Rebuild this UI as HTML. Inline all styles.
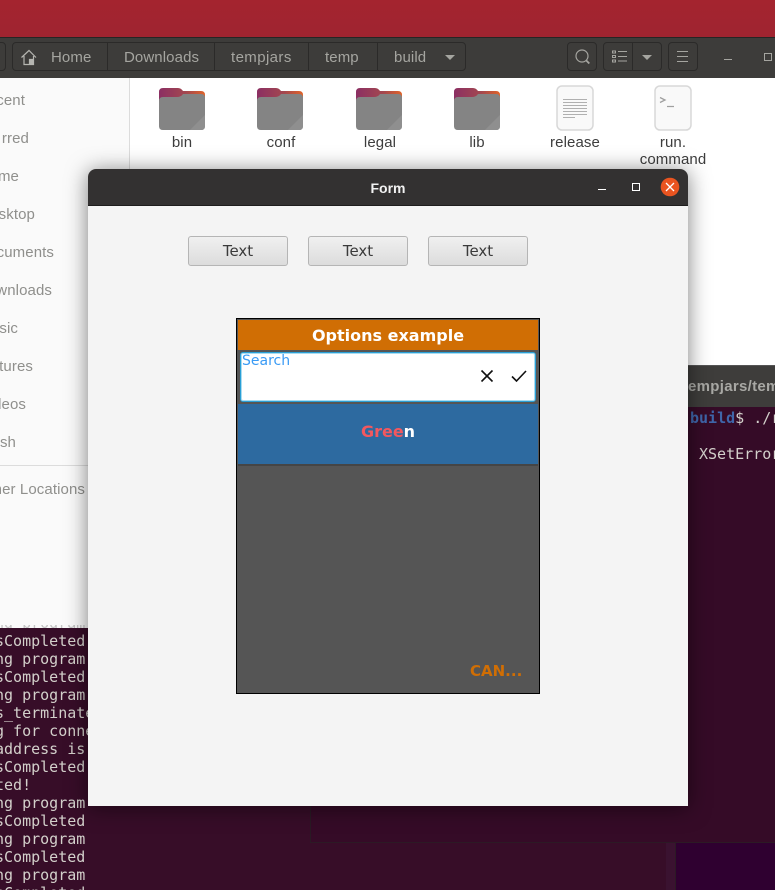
<!DOCTYPE html>
<html><head><meta charset="utf-8"><style>
html,body{margin:0;padding:0;background:#370d28;width:775px;height:890px;overflow:hidden}
#r{position:absolute;left:0;top:0;width:775px;height:890px;overflow:hidden;font-family:"Liberation Sans",sans-serif}
.a{position:absolute}
.t{position:absolute;white-space:pre;line-height:18px}
.term{font-family:"DejaVu Sans Mono","Liberation Mono",monospace;font-size:15px;color:#d3d0cb}
.side{width:200px;text-align:right;color:#8f8f8c;font-size:15px;letter-spacing:.1px;line-height:18px;position:absolute;white-space:pre}
.lbl{position:absolute;text-align:center;color:#3d3d3d;font-size:15px;letter-spacing:.1px;line-height:17px;white-space:pre}
.crumb{position:absolute;color:#a5a5a0;font-size:15px;letter-spacing:.1px;line-height:18px;top:49px;white-space:pre}
.sep{position:absolute;top:42px;height:29px;width:1px;background:#2b2a29}
.hbtn{position:absolute;top:42px;height:27px;border:1px solid #2b2a29;border-radius:4px;box-sizing:content-box}
.btn{position:absolute;top:236px;width:98px;height:28px;border:1px solid #b5b5b5;border-radius:3px;background:linear-gradient(#f0f0f0,#dcdcdc);color:#3a3a3a;font:15px/28px "DejaVu Sans",sans-serif;text-align:center}
</style></head><body><div id="r">

<!-- wallpaper / bottom terminals -->
<div class="a" style="left:0;top:0;width:775px;height:37px;background:linear-gradient(#a4242f,#9f2430)"></div>
<div class="a" style="left:0;top:628px;width:310px;height:262px;background:#370d28"></div>
<div class="a" style="left:310px;top:406px;width:465px;height:436px;background:#350b27;border-left:1px solid #2a1a24;box-sizing:border-box"></div>
<div class="a" style="left:310px;top:842px;width:465px;height:1px;background:#2c1a25"></div>
<div class="a" style="left:666px;top:843px;width:9px;height:47px;background:#3a1230"></div>
<div class="a" style="left:675px;top:843px;width:1px;height:47px;background:#2c1a25"></div>
<div class="a" style="left:676px;top:843px;width:99px;height:47px;background:#2f0030"></div>

<!-- left terminal text -->
<div class="t term" style="left:-5px;top:632px;width:93px;height:258px;overflow:hidden;">sCompleted
ng program
sCompleted
ng program
s_terminate
g for conne
address is
sCompleted
ted!
ng program
sCompleted
ng program
sCompleted
ng program
sCompleted</div>

<!-- file manager -->
<div class="a" style="left:0;top:37px;width:775px;height:41px;background:#3d3c3a;border-top:1px solid #262524;box-sizing:border-box"></div>
<div class="a" style="left:0;top:78px;width:129px;height:550px;background:#fafafa;border-right:1px solid #dcdcdc;box-sizing:content-box"></div>
<div class="a" style="left:130px;top:78px;width:645px;height:287px;background:#fff"></div>
<div class="a" style="left:130px;top:365px;width:180px;height:263px;background:#fff"></div>
<div class="a" style="left:0;top:465px;width:130px;height:1px;background:#dcdcdc"></div>
<div class="t term" style="left:-5px;top:614px;width:93px;height:14px;overflow:hidden;color:#c4c4c4;clip-path:inset(11px 0 0 0)">ng program</div>

<div class="hbtn" style="left:-8px;width:12px"></div>
<div class="hbtn" style="left:12px;width:452px"></div>
<div class="sep" style="left:107px"></div><div class="sep" style="left:214px"></div><div class="sep" style="left:308px"></div><div class="sep" style="left:377px"></div>
<svg class="a" style="left:20px;top:48px" width="18" height="18" viewBox="0 0 18 18" fill="none" stroke="#b5b5b0" stroke-width="1.2"><path d="M1.500 9.500 9 2.500l7 7M4 8v8.500h9.500V8"/><path d="M9.500 16.500v-5h3v5" fill="#b5b5b0"/></svg>
<div class="crumb" style="left:51px">Home</div>
<div class="crumb" style="left:124px">Downloads</div>
<div class="crumb" style="left:231px;letter-spacing:.4px">tempjars</div>
<div class="crumb" style="left:325px">temp</div>
<div class="crumb" style="left:394px">build</div>
<svg class="a" style="left:445px;top:55px" width="10" height="5"><path d="M0 0h10L5 5z" fill="#a5a5a0"/></svg>

<div class="hbtn" style="left:567px;width:28px"></div>
<svg class="a" style="left:574px;top:49px" width="20" height="16" viewBox="0 0 20 16" fill="none" stroke="#a5a5a0" stroke-width="1.200"><circle cx="8" cy="7" r="6"/><path d="M12.300 11.500l3 3" stroke-width="1.800"/></svg>
<div class="hbtn" style="left:603px;width:57px"></div>
<div class="sep" style="left:632px"></div>
<svg class="a" style="left:612px;top:50px" width="16" height="13" fill="none" stroke="#a5a5a0"><path d="M0.500 1h3v2h-3zM0.500 5.500h3v2h-3zM0.500 10h3v2h-3z"/><path d="M6 1.500h9M6 6.500h9M6 11h9"/></svg>
<svg class="a" style="left:642px;top:55px" width="10" height="5"><path d="M0 0h10L5 5z" fill="#a5a5a0"/></svg>
<div class="hbtn" style="left:668px;width:28px"></div>
<svg class="a" style="left:677px;top:51px" width="12" height="11" fill="none" stroke="#a5a5a0"><path d="M0 .5h11M0 5.500h11M0 10.500h11"/></svg>
<div class="a" style="left:724px;top:59px;width:8px;height:1px;background:#a5a5a0"></div>
<div class="a" style="left:764px;top:53px;width:6px;height:6px;border:1px solid #a5a5a0"></div>

<div class="side" style="top:92px;left:-175px">cent</div>
<div class="side" style="top:130px;left:-171px">rred</div>
<div class="side" style="top:168px;left:-181px">me</div>
<div class="side" style="top:206px;left:-165px">sktop</div>
<div class="side" style="top:244px;left:-146px">cuments</div>
<div class="side" style="top:282px;left:-148px">wnloads</div>
<div class="side" style="top:320px;left:-182px">sic</div>
<div class="side" style="top:358px;left:-167px">tures</div>
<div class="side" style="top:396px;left:-174px">leos</div>
<div class="side" style="top:434px;left:-184px">sh</div>
<div class="side" style="top:481px;left:-115px">her Locations</div>

<!-- folders -->
<svg width="0" height="0" style="position:absolute"><defs><linearGradient id="f" x1="0" x2="1" y1="0" y2="0"><stop offset="0" stop-color="#8b2f63"/><stop offset=".6" stop-color="#a4484f"/><stop offset="1" stop-color="#e0642a"/></linearGradient>
<g id="fo"><path d="M0 5q0-4 4-4h15q3 0 5 3h18q4 0 4 4v14H0z" fill="url(#f)"/><path d="M0 14q0-4 4-4h14q4 0 6-3h18q4 0 4 4v28q0 4-4 4H4q-4 0-4-4z" fill="#848484"/><path d="M46 28v11q0 4-4 4H31z" fill="#8f8f8f"/></g></defs></svg>
<svg class="a" style="left:159px;top:87px" width="46" height="43"><use href="#fo"/></svg>
<svg class="a" style="left:257px;top:87px" width="46" height="43"><use href="#fo"/></svg>
<svg class="a" style="left:356px;top:87px" width="46" height="43"><use href="#fo"/></svg>
<svg class="a" style="left:454px;top:87px" width="46" height="43"><use href="#fo"/></svg>
<svg class="a" style="left:556px;top:85px" width="38" height="46"><rect x="1" y="1" width="36" height="44" rx="5" fill="#f9f9f9" stroke="#d8d8d8" stroke-width="1.500"/><path d="M7 14.500h24M7 17.500h24M7 20.500h24M7 23.500h24M7 26.500h24M7 29.500h24M7 32.500h12" stroke="#b0b0b0"/></svg>
<svg class="a" style="left:654px;top:85px" width="38" height="46"><rect x="1" y="1" width="36" height="44" rx="5" fill="#f9f9f9" stroke="#d8d8d8" stroke-width="1.500"/><path d="M6 12.500l5 2.500-5 2.500M13 21.500h7" stroke="#a0a0a0" fill="none" stroke-width="1.300"/></svg>
<div class="lbl" style="left:142px;top:134px;width:80px">bin</div>
<div class="lbl" style="left:241px;top:134px;width:80px">conf</div>
<div class="lbl" style="left:340px;top:134px;width:80px">legal</div>
<div class="lbl" style="left:437px;top:134px;width:80px">lib</div>
<div class="lbl" style="left:535px;top:134px;width:80px">release</div>
<div class="lbl" style="left:633px;top:134px;width:80px">run.
command</div>

<!-- right terminal -->
<div class="a" style="left:688px;top:365px;width:87px;height:41px;background:#3e3d3b;border-top:1px solid #555"></div>
<div class="t" style="left:688px;top:377px;font:bold 15px/20px 'Liberation Sans',sans-serif;letter-spacing:.3px;color:#a8a8a4;width:87px;overflow:hidden">empjars/tem</div>
<div class="t term" style="left:690px;top:409px;width:85px;overflow:hidden;"><span style="color:#3f66aa;font-weight:bold">build</span>$ ./r</div>
<div class="t term" style="left:699px;top:445px;width:76px;overflow:hidden;">XSetError</div>

<!-- Form window -->
<div class="a" style="left:88px;top:169px;width:600px;height:637px;border-radius:8px 8px 0 0;box-shadow:0 2px 22px rgba(0,0,0,.5)"></div>
<div class="a" style="left:88px;top:169px;width:600px;height:37px;background:#333131;border-radius:8px 8px 0 0;border-bottom:1px solid #1e1d1d;box-sizing:border-box"></div>
<div class="a" style="left:88px;top:206px;width:600px;height:600px;background:#f4f4f4"></div>
<div class="a" style="left:88px;top:179px;width:600px;text-align:center;color:#f2f2f2;font:bold 14px/18px 'Liberation Sans',sans-serif">Form</div>
<div class="a" style="left:598px;top:189px;width:8px;height:1px;background:#fff"></div>
<div class="a" style="left:632px;top:183px;width:6px;height:6px;border:1px solid #fff"></div>
<svg class="a" style="left:660px;top:177px" width="20" height="20"><circle cx="10" cy="10" r="9.300" fill="#e95420"/><path d="M6 6l8 8M14 6l-8 8" stroke="#fff" stroke-width="1.300"/></svg>

<div class="btn" style="left:188px">Text</div>
<div class="btn" style="left:308px">Text</div>
<div class="btn" style="left:428px">Text</div>

<!-- phone -->
<div class="a" style="left:236px;top:318px;width:304px;height:376px;background:#555;border:1px solid #000;box-sizing:border-box"></div>
<div class="a" style="left:238px;top:320px;width:300px;height:30px;background:#d06e04;color:#fff;text-align:center;font:bold 16px/32px 'DejaVu Sans',sans-serif">Options example</div>
<div class="a" style="left:240px;top:352px;width:296px;height:50px;background:#fff;border:1px solid #2a9fd6;border-radius:3px;box-sizing:border-box;box-shadow:inset 0 0 0 1px #a9dcf0"></div>
<div class="t" style="left:242px;top:352px;font:14px/18px 'DejaVu Sans',sans-serif;color:#3a9bf5">Search</div>
<svg class="a" style="left:480px;top:369px" width="14" height="14"><path d="M1.500 1.500l11 11M12.500 1.500l-11 11" stroke="#111" stroke-width="1.600"/></svg>
<svg class="a" style="left:511px;top:369px" width="16" height="14"><path d="M1 7.500l4.500 4.500L15 2" stroke="#111" stroke-width="1.600" fill="none"/></svg>
<div class="a" style="left:238px;top:404px;width:300px;height:60px;background:#2d6aa0;text-align:center;font:bold 16px/56px 'DejaVu Sans',sans-serif;color:#f2585f">Gree<span style="color:#fff">n</span></div>
<div class="a" style="left:238px;top:464px;width:300px;height:2px;background:#454545"></div>
<div class="t" style="left:470px;top:662px;font:bold 15px/18px 'DejaVu Sans',sans-serif;color:#d06e04">CAN...</div>

</div></body></html>
